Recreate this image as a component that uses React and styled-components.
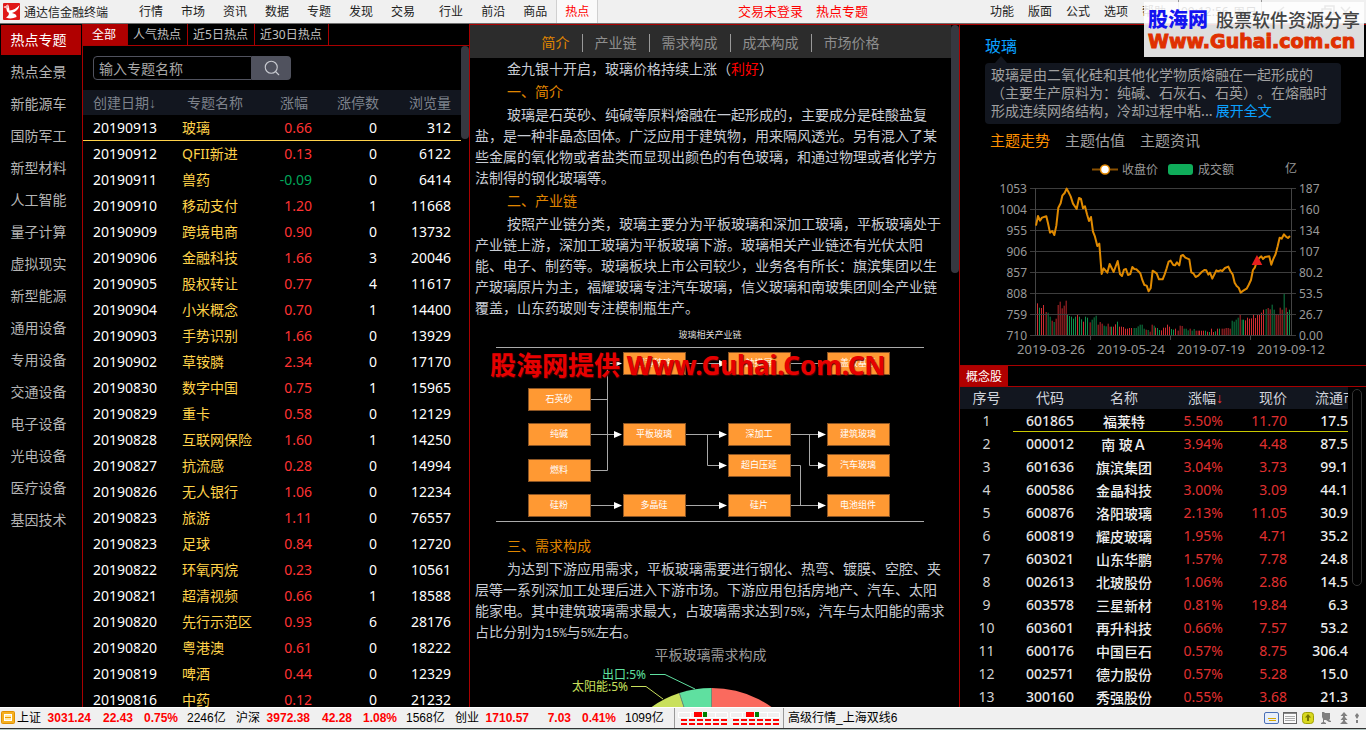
import React, { useState } from 'react'
import styled, { createGlobalStyle } from 'styled-components'
import { Search } from 'lucide-react'

const GlobalStyle = createGlobalStyle`
    * {
        box-sizing: border-box;
    }
    body {
        margin: 0;
        background: #000;
        font-family: 'Noto Sans', 'Noto Sans CJK SC', sans-serif;
        font-size: 14px;
        overflow: hidden;
    }
    button {
        font-family: inherit;
        border: 0;
        padding: 0;
        margin: 0;
        background: none;
        cursor: pointer;
        white-space: nowrap;
    }
    table {
        border-collapse: collapse;
        border-spacing: 0;
    }
    p, h2, h3 {
        margin: 0;
        font-weight: 400;
    }
`

const mainMenu = ['行情', '市场', '资讯', '数据', '专题', '发现', '交易', '行业', '前沿', '商品', '热点']
const toolMenu = ['功能', '版面', '公式', '选项', '帮助']

const categories = [
    '热点专题', '热点全景', '新能源车', '国防军工', '新型材料', '人工智能', '量子计算', '虚拟现实',
    '新型能源', '通用设备', '专用设备', '交通设备', '电子设备', '光电设备', '医疗设备', '基因技术',
]

const topicTabs = ['全部', '人气热点', '近5日热点', '近30日热点']

const topics = [
    ['20190913', '玻璃', '0.66', 0, 312],
    ['20190912', 'QFII新进', '0.13', 0, 6122],
    ['20190911', '兽药', '-0.09', 0, 6414],
    ['20190910', '移动支付', '1.20', 1, 11668],
    ['20190909', '跨境电商', '0.90', 0, 13732],
    ['20190906', '金融科技', '1.66', 3, 20046],
    ['20190905', '股权转让', '0.77', 4, 11617],
    ['20190904', '小米概念', '0.70', 1, 14400],
    ['20190903', '手势识别', '1.66', 0, 13929],
    ['20190902', '草铵膦', '2.34', 0, 17170],
    ['20190830', '数字中国', '0.75', 1, 15965],
    ['20190829', '重卡', '0.58', 0, 12129],
    ['20190828', '互联网保险', '1.60', 1, 14250],
    ['20190827', '抗流感', '0.28', 0, 14994],
    ['20190826', '无人银行', '1.06', 0, 12234],
    ['20190823', '旅游', '1.11', 0, 76557],
    ['20190823', '足球', '0.84', 0, 12720],
    ['20190822', '环氧丙烷', '0.23', 0, 10561],
    ['20190821', '超清视频', '0.66', 1, 18588],
    ['20190820', '先行示范区', '0.93', 6, 28176],
    ['20190820', '粤港澳', '0.61', 0, 18222],
    ['20190819', '啤酒', '0.44', 0, 12329],
    ['20190816', '中药', '0.12', 0, 21232],
]

const articleTabs = ['简介', '产业链', '需求构成', '成本构成', '市场价格']

const stocks = [
    ['601865', '福莱特', '5.50%', '11.70', '17.5'],
    ['000012', '南 玻Ａ', '3.94%', '4.48', '87.5'],
    ['601636', '旗滨集团', '3.04%', '3.73', '99.1'],
    ['600586', '金晶科技', '3.00%', '3.09', '44.1'],
    ['600876', '洛阳玻璃', '2.13%', '11.05', '30.9'],
    ['600819', '耀皮玻璃', '1.95%', '4.71', '35.2'],
    ['603021', '山东华鹏', '1.57%', '7.78', '24.8'],
    ['002613', '北玻股份', '1.06%', '2.86', '14.5'],
    ['603578', '三星新材', '0.81%', '19.84', '6.3'],
    ['603601', '再升科技', '0.66%', '7.57', '53.2'],
    ['600176', '中国巨石', '0.57%', '8.75', '306.4'],
    ['002571', '德力股份', '0.57%', '5.28', '15.0'],
    ['300160', '秀强股份', '0.55%', '3.68', '21.3'],
]

const indexes = [
    ['上证', '3031.24', '22.43', '0.75%', '2246亿'],
    ['沪深', '3972.38', '42.28', '1.08%', '1568亿'],
    ['创业', '1710.57', '7.03', '0.41%', '1099亿'],
]

const Page = styled.div`
    display: flex;
    flex-direction: column;
    height: 100vh;
    overflow: hidden;
    position: relative;
`

/* ---------- top bar ---------- */

const TopBar = styled.header`
    display: flex;
    align-items: stretch;
    flex: none;
    height: 24px;
    background: #f0f0f0;
    border-bottom: 1px solid #6e6e6e;
    font-size: 12px;
    color: #222;
`

const Brand = styled.div`
    display: flex;
    align-items: center;
    gap: 3px;
    width: 130px;
    padding-left: 3px;
`

const MenuButton = styled.button`
    height: 23px;
    padding: 0 ${props => props.$tight ? '7px' : '9px'};
    font-size: 12px;
    line-height: 22px;
    color: ${props => props.$active ? '#f00' : '#222'};
    background: ${props => props.$active ? '#fafafa' : 'transparent'};
    box-shadow: ${props => props.$active ? 'inset 1px 0 #d0d0d0, inset -1px 0 #d0d0d0' : 'none'};
    margin-left: ${props => props.$split ? '6px' : '0'};
`

const Spacer = styled.div`
    flex: ${props => props.$grow} 0 0;
`

const Notice = styled.a`
    font-size: 13px;
    line-height: 22px;
    color: #f00;
    text-decoration: none;
    margin-right: ${props => props.$gap ? '13px' : '0'};
`

const Clock = styled.div`
    display: flex;
    justify-content: space-between;
    align-items: center;
    width: 84px;
    margin-left: 5px;
    padding: 0 4px 0 2px;
    border-left: 1px solid #999;
    border-right: 1px solid #999;
`

const WindowButtons = styled.div`
    display: flex;
    align-items: center;
    gap: 14px;
    width: 104px;
    padding-left: 12px;
`

const SiteStamp = styled.div`
    position: absolute;
    top: 2px;
    right: 2px;
    width: 220px;
    height: 55px;
    padding: 4px 4px 0;
    overflow: hidden;
    background: rgba(255, 255, 255, 0.87);
    white-space: nowrap;
`

const StampLine = styled.div`
    display: flex;
    align-items: center;
    gap: 8px;
    height: 25px;
`

const StampName = styled.span`
    font: 900 20px 'Noto Sans CJK SC', sans-serif;
    color: #1414f0;
`

const StampSlogan = styled.span`
    font: 500 18px 'Noto Sans CJK SC', sans-serif;
    color: #444;
`

const StampUrl = styled.div`
    font: bold 19px/20px 'DejaVu Sans', sans-serif;
    color: #e03000;
    -webkit-text-stroke: 1px #e03000;
`

/* ---------- layout ---------- */

const Main = styled.main`
    flex: 1;
    min-height: 0;
    display: grid;
    grid-template-columns: 82px 387px minmax(0, 490fr) minmax(0, 407fr);
    grid-template-rows: minmax(0, 1fr);
`

const Thumb = styled.div`
    width: 8px;
    height: ${props => props.$height};
    border-radius: 4px;
    background: #363840;
`

const SideNav = styled.nav`
    display: flex;
    flex-direction: column;
    gap: 2px;
    padding: 1px 1px 0;
`

const SideItem = styled.button`
    height: 30px;
    padding: 0 5px 2px 0;
    font-size: 14px;
    color: ${props => props.$active ? '#fff' : '#b4b4b4'};
    background: ${props => props.$active ? '#b00000' : 'transparent'};
`

/* ---------- topics ---------- */

const TopicPanel = styled.section`
    display: flex;
    flex-direction: column;
    overflow: hidden;
    border-left: 1px solid #a80000;
`

const TopicTabs = styled.div`
    display: flex;
    flex: none;
    height: 22px;
    border-bottom: 1px solid #a80000;
`

const TopicTab = styled.button`
    padding: ${props => props.$active ? '0 11px 0 9px' : '0 6px 0 5px'};
    font-size: 12px;
    line-height: 20px;
    color: ${props => props.$active ? '#fff' : '#c0c0c0'};
    background: ${props => props.$active ? '#b00000' : 'transparent'};
    border-right: 1px solid #a80000;
`

const TopicBody = styled.div`
    display: flex;
    min-height: 0;
    overflow: hidden;
`

const TopicList = styled.div`
    flex: 1;
`

const SearchForm = styled.form`
    display: flex;
    margin: 10px 0 10px 10px;
    height: 24px;
`

const SearchInput = styled.input`
    width: 159px;
    padding: 0 5px;
    font: 14px 'Noto Sans CJK SC', sans-serif;
    color: #a8a8a8;
    background: #000;
    border: 1px solid #50525e;
    border-radius: 4px 0 0 4px;
    outline: 0;
    &::placeholder {
        color: #a8a8a8;
    }
`

const SearchButton = styled.button`
    display: flex;
    align-items: center;
    justify-content: center;
    width: 39px;
    background: #50525e;
    border-radius: 0 4px 4px 0;
`

const SortArrow = styled.i`
    font-family: 'Liberation Sans', sans-serif;
    font-style: normal;
`

const TopicTable = styled.table`
    width: 100%;
    table-layout: fixed;
    th {
        height: 25px;
        padding: 0 0 1px;
        font-weight: 400;
        text-align: right;
        color: #7d828c;
        background: #12161f;
        white-space: nowrap;
    }
    th:nth-child(1) { width: 99px; padding-left: 10px; text-align: left; }
    th:nth-child(2) { width: 62px; padding-left: 5px; text-align: left; }
    th:nth-child(3) { width: 68px; padding-right: 4px; }
    th:nth-child(4) { width: 67px; }
    th:nth-child(5) { padding-right: 10px; }
    td {
        height: 26px;
        padding: 0 0 2px;
        text-align: right;
        color: #fff;
        white-space: nowrap;
    }
    td:nth-child(1) { padding-left: 10px; text-align: left; }
    td:nth-child(2) { color: #ffd24a; text-align: left; }
    td:nth-child(4) { padding-right: 2px; }
    td:nth-child(5) { padding-right: 10px; }
`

const TopicRow = styled.tr`
    cursor: pointer;
    td {
        box-shadow: ${props => props.$active ? 'inset 0 -1px #ffd24a' : 'none'};
    }
`

const Change = styled.td`
    && {
        color: ${props => props.$down ? '#00a65a' : '#ff3333'};
    }
`

/* ---------- article ---------- */

const ArticlePanel = styled.section`
    display: flex;
    min-height: 0;
    overflow: hidden;
    border-left: 1px solid #a80000;
    border-top: 1px solid #a80000;
`

const ArticleBody = styled.div`
    flex: 1;
    min-width: 0;
`

const ArticleTabs = styled.div`
    display: flex;
    align-items: center;
    justify-content: center;
    height: 33px;
    padding-top: 2px;
    background: #2c2c2c;
`

const ArticleTab = styled.button`
    padding: 0 12px;
    font-size: 14px;
    line-height: 18px;
    color: ${props => props.$active ? '#e08600' : '#8f8f8f'};
    border-right: 1px solid #999;
    &:last-child {
        border-right: 0;
    }
`

const Text = styled.p`
    padding: 0 5px;
    margin-bottom: 2px;
    font-family: 'Noto Sans CJK SC', sans-serif;
    font-size: 14px;
    line-height: 21px;
    text-indent: 32px;
    text-spacing-trim: space-all;
    color: #c8ccd4;
`

const Heading = styled(Text).attrs({ as: 'h3' })`
    color: #e08600;
`

const Good = styled.span`
    color: #f00;
`

const Num = styled.span`
    font: 12px 'Liberation Mono', monospace;
`

const Figure = styled.figure`
    position: relative;
    display: flex;
    justify-content: center;
    margin: 0 0 1px;
    padding-top: 1px;
`

const FigureStamp = styled.div`
    position: absolute;
    top: 26px;
    left: 20px;
    font: bold 26px/38px 'Noto Sans', 'Noto Sans CJK SC', sans-serif;
    color: #e60000;
    text-shadow: 1px 1px 1px #500;
    white-space: nowrap;
`

const PieTitle = styled(Text)`
    text-align: center;
    text-indent: 0;
    color: #999;
`

/* ---------- right side ---------- */

const RightPanel = styled.aside`
    display: flex;
    flex-direction: column;
    overflow: hidden;
    border-left: 1px solid #a80000;
    border-top: 1px solid #a80000;
`

const ThemeBox = styled.div`
    flex: none;
    height: 340px;
    padding: 9px 25px 0;
`

const ThemeName = styled.h2`
    font-size: 16px;
    line-height: 24px;
    color: #0aa0ff;
`

const Bubble = styled.div`
    position: relative;
    margin-top: 5px;
    padding: 2px 6px 5px;
    line-height: 18px;
    font-family: 'Noto Sans CJK SC', sans-serif;
    text-spacing-trim: space-all;
    color: #a0a0a0;
    background: #12161f;
    border-radius: 4px;
    &::before {
        content: '';
        position: absolute;
        left: 10px;
        top: -7px;
        border: 6px solid transparent;
        border-top: 0;
        border-bottom: 7px solid #12161f;
    }
    a {
        color: #0aa0ff;
        text-decoration: none;
    }
`

const ThemeTabs = styled.div`
    display: flex;
    gap: 15px;
    height: 31px;
    padding-left: 5px;
`

const ThemeTab = styled.button`
    font-size: 15px;
    color: ${props => props.$active ? '#ff9100' : '#a0a0a0'};
`

const StockTabs = styled.div`
    display: flex;
    flex: none;
    height: 22px;
    border-top: 1px solid #a80000;
    border-bottom: 1px solid #a80000;
`

const StockTab = styled.button`
    width: 48px;
    font-size: 12px;
    color: #fff;
    background: #b00000;
`

const StockBody = styled.div`
    display: flex;
    min-height: 0;
    overflow: hidden;
`

const StockTable = styled.table`
    flex: 1;
    width: 0;
    table-layout: fixed;
    th, td {
        height: 23px;
        padding: 0;
        text-align: right;
        white-space: nowrap;
        overflow: hidden;
    }
    th {
        height: 22px;
        padding-bottom: 1px;
        line-height: 20px;
        font-weight: 400;
        color: #d0d4dc;
        background: #12161f;
    }
    th:nth-child(1) { width: 53px; text-align: center; }
    th:nth-child(2) { width: 74px; text-align: center; }
    th:nth-child(3) { width: 74px; text-align: center; }
    th:nth-child(4) { width: 62px; }
    th:nth-child(5) { width: 64px; }
    th:nth-child(6) { padding-left: 28px; text-align: left; }
    th i { color: #ff3333; }
    td:nth-child(1) { color: #d0d0d0; text-align: center; }
    td:nth-child(2) { color: #e6e6e6; font-weight: 500; text-align: center; }
    td:nth-child(3) { color: #eee; font-weight: 500; text-align: center; }
    td:nth-child(4), td:nth-child(5) { color: #e03030; }
    td:nth-child(6) { color: #eee; font-weight: 500; }
`

const StockRow = styled.tr`
    cursor: pointer;
    td + td {
        box-shadow: ${props => props.$active ? 'inset 0 -1px #c8c800' : 'none'};
    }
`

const PillTrack = styled.div`
    flex: none;
    width: 18px;
    padding: 2px 4px 0;
`

const Pill = styled.div`
    width: 10px;
    height: 197px;
    border: 1px solid #333;
    border-radius: 5px;
`

/* ---------- status bar ---------- */

const StatusBar = styled.footer`
    display: flex;
    align-items: center;
    flex: none;
    height: 23px;
    padding: 0 6px 2px 1px;
    font-family: 'Liberation Sans', 'Noto Sans CJK SC', sans-serif;
    font-size: 12px;
    line-height: 18px;
    color: #000;
    background: #f0f0f0;
    border-top: 1px solid #fff;
    box-shadow: inset 0 -1px #b4c6c2, inset 0 -2px #333;
    white-space: nowrap;
`

const Quote = styled.div`
    display: grid;
    grid-template-columns: 28px 46px 42px 45px 58px;
    align-items: baseline;
    span {
        text-align: right;
    }
    span:first-child {
        text-align: left;
    }
    span:last-child {
        padding-left: 9px;
        text-align: left;
    }
`

const Red = styled.span`
    font-weight: 700;
    color: #f00;
`

const StatusCell = styled.div`
    display: flex;
    align-items: center;
    gap: 2px;
    height: 20px;
    padding: 0 ${props => props.$pad};
    border-left: 1px solid #999;
`

const TrayIcons = styled.div`
    display: flex;
    margin-left: auto;
`

const Logo = () => (
    <svg width="18" height="18" viewBox="0 0 18 18">
        <rect width="17" height="17" rx="1" fill="#e01818" />
        <path d="M0.500 4Q3 3 5 1.500Q6.500 4 6.500 7.500Q12 7 16.500 2Q15.500 8 9 10Q14 11 13.500 14Q8 16.500 3 14.500Q7 12 5.500 9.500Q3.500 9 3.500 5.500Z" fill="#fff" />
        <path d="M0.500 4Q3 3 5 1.500L5.500 5L3.500 5.500Z" fill="#f6b0b0" />
    </svg>
)

/* industry chain: column x and row y of every box */
const BOX_W = 62
const BOX_H = 23
const chainBoxes = [
    [153, 31, '超薄玻璃'], [258, 31, '触摸屏'], [357, 31, '盖板基板'],
    [58, 67, '石英砂'],
    [58, 102, '纯碱'], [153, 102, '平板玻璃'], [258, 102, '深加工'], [357, 102, '建筑玻璃'],
    [258, 133, '超白压延'], [357, 133, '汽车玻璃'],
    [58, 138, '燃料'],
    [58, 173, '硅粉'], [153, 173, '多晶硅'], [258, 173, '硅片'], [357, 173, '电池组件'],
]
const chainLines = [
    'M120 78.5H138', 'M120 149.5H137.5', 'M137.5 149.5V42.5H145', 'M120 113.5H145',
    'M215 42.5H250', 'M320 42.5H349', 'M215 113.5H250', 'M320 113.5H349',
    'M237.5 113.5V144.5H250', 'M339.5 113.5V144.5H349', 'M320 144.5H330.5V184.5',
    'M120 184.5H145', 'M215 184.5H250', 'M320 184.5H349',
]
const chainArrows = [
    [153, 42.5], [258, 42.5], [357, 42.5], [153, 113.5], [258, 113.5], [357, 113.5],
    [258, 144.5], [357, 144.5], [153, 184.5], [258, 184.5], [357, 184.5],
]

const IndustryChain = () => (
    <svg width="480" height="213" viewBox="1 0 480 213" fontFamily="Noto Sans CJK SC, sans-serif" fontSize="9" textAnchor="middle">
        <text x="240" y="17" fill="#ddd">玻璃相关产业链</text>
        <path d="M26 26.5H454M26 200.5H454" stroke="#aaa" fill="none" />
        {chainLines.map(d => <path key={d} d={d} stroke="#a8a8a8" fill="none" />)}
        {chainArrows.map(([x, y]) => (
            <path key={`${x}-${y}`} d={`M${x - 1} ${y} l-8 -3.5 v7 z`} fill="#fff" />
        ))}
        {chainBoxes.map(([x, y, name]) => (
            <g key={name}>
                <rect x={x + 0.5} y={y + 0.5} width={BOX_W} height={BOX_H - 1} fill="#ff9933" stroke="#8a5424" />
                <text x={x + 31} y={y + 14} fill="#fff">{name}</text>
            </g>
        ))}
    </svg>
)

const DemandPie = () => (
    <Figure>
        <svg width="480" height="250" viewBox="0 0 480 250" fontFamily="Noto Sans, Noto Sans CJK SC, sans-serif" fontSize="12">
            <path d="M240.500 124V20A104 104 0 1 1 179.400 39.900Z" fill="#fa6a5e" />
            <path d="M240.500 124L179.400 39.900A104 104 0 0 1 208.400 25.100Z" fill="#c9e05c" />
            <path d="M240.500 124L208.400 25.100A104 104 0 0 1 240.500 20Z" fill="#5fe0a0" />
            <path d="M240.500 124V20M240.500 124L208.400 25.100" stroke="#6a8f78" fill="none" />
            <path d="M179 6.500H194L224 21" stroke="#5fe0a0" fill="none" />
            <path d="M160 18.500H175L192 31" stroke="#c9e05c" fill="none" />
            <text x="175" y="11" fill="#5fe0a0" textAnchor="end">出口:5%</text>
            <text x="157" y="23" fill="#c9e05c" textAnchor="end">太阳能:5%</text>
        </svg>
    </Figure>
)

/* close price trace, in thirds of a pixel */
const closeTrace = `228,212 234,183 240,197 246,188 259,184 264,205 270,233 277,228 283,240 289,212 295,158
    302,145 307,122 314,114 320,101 326,112 332,124 339,146 350,162 357,129 363,132 369,160 375,154 381,178
    387,198 393,186 399,230 405,245 412,273 418,266 425,357 431,340 442,353 449,327 461,351 473,318 480,357
    486,363 492,344 498,342 504,360 511,357 517,336 523,342 529,343 541,355 547,375 553,390 560,392 566,409
    572,400 578,347 590,355 597,373 608,373 614,358 620,340 626,320 632,317 640,330 645,331 651,322 658,331
    663,303 669,300 676,308 688,313 694,352 700,355 707,366 715,362 725,351 733,345 739,346 745,359 750,353
    757,371 769,346 775,349 781,346 787,348 795,339 805,335 811,348 818,358 824,383 830,393 836,398 842,413
    850,407 860,401 866,390 873,375 879,345 885,337 891,317 897,310 904,304 909,312 915,306 928,304 934,329
    940,312 947,297 953,274 959,248 965,251 972,238 978,245 984,249 990,243`

const volumes = `r88 r98 g85 r84 r93 r72 g70 g58 r46 g42 r52 r93 r103 r83 r91 r106 g65 g60 g58 g52 g58 r64 g58
    g50 r43 g58 g55 r41 g49 g56 g61 r34 r42 r37 g31 g29 r37 r28 g28 r28 r35 g43 r28 r28 r27 r22 r22 r24 r24
    g24 g24 g29 g34 g34 g22 r19 g18 r13 r34 g31 r25 g24 g18 r17 r25 r25 r34 r28 g21 g19 r22 r16 r31 r30 g22
    g22 g17 r22 g16 g21 r16 r16 r16 r16 r16 g16 r13 g12 r22 r12 g14 r22 g22 r22 r22 r24 r24 r22 g46 g43 g49
    g55 r64 g49 g49 r47 r55 r52 r53 r66 r54 r63 r63 r70 r79 g81 r84 r80 g94 g79 r66 r64 r85 r79 g127 r85
    g72 g79 r73`.split(/\s+/)

const leftAxis = ['1053', '1004', '955', '906', '857', '808', '759', '710']
const rightAxis = ['187', '160', '134', '107', '80.2', '53.5', '26.7', '0.00']
const dates = ['2019-03-26', '2019-05-24', '2019-07-19', '2019-09-12']

const TrendChart = () => (
    <svg width="356" height="205" viewBox="25 0 356 205" fontFamily="Noto Sans, Noto Sans CJK SC, sans-serif" fontSize="12" fill="#999">
        <path d="M132 14.500H158" stroke="#8a5000" strokeWidth="2" />
        <circle cx="145" cy="14.500" r="4.500" fill="#fff" stroke="#e08600" strokeWidth="1.500" />
        <text x="162" y="19">收盘价</text>
        <rect x="208" y="9" width="25" height="11" rx="3" fill="#0fac5a" />
        <text x="238" y="19">成交额</text>
        <text x="325" y="18">亿</text>
        {volumes.map((v, i) => {
            const h = Number(v.slice(1)) / 3
            const shift = i % 22 >= 5 && i % 22 < 16 ? 0.5 : 0
            const wide = shift ? 1.5 : 1
            return (
                <rect key={i} x={75 + i * 2 + shift} y={181 - h} width={wide} height={h}
                    fill={v[0] === 'r' ? '#d02c30' : '#0f8f4c'} opacity={shift ? 0.6 : 1} />
            )
        })}
        {leftAxis.map((label, i) => (
            <g key={label}>
                <path d={`M70 ${33.5 + i * 21}H336`} stroke="#444" strokeOpacity="0.9" />
                <text x="67" y={38 + i * 21} textAnchor="end">{label}</text>
                <text x="339" y={38 + i * 21}>{rightAxis[i]}</text>
            </g>
        ))}
        <path d="M75.500 33V181M331.500 33V181M130.500 181V185M210.500 181V185M290.500 181V185" stroke="#444" />
        {dates.map((d, i) => (
            <text key={d} x={91 + i * 80} y="199" fontSize="13" textAnchor="middle">{d}</text>
        ))}
        <g transform="scale(0.3333)">
            <polyline points={closeTrace} fill="none" stroke="#e08a00" strokeWidth="6" strokeLinejoin="round" />
            <path d="M891 300L907 330H875Z" fill="#e61e1e" />
        </g>
    </svg>
)

const Meter = () => (
    <svg width="50" height="15" viewBox="0 0 50 15">
        <path d="M0.500 1.500H49.500V6.500H0.500ZM12.500 1.500V6.500M37.500 1.500V6.500" fill="none" stroke="#fff" />
        <rect x="16" y="1" width="8" height="5" fill="#f00" />
        <rect x="25" y="1" width="4" height="5" fill="#008000" />
        {[0, 8, 16, 24, 32, 40].map(x => (
            <path key={x} d={`M${x + 3} 9h6M${x + 3} 13h6`} stroke="#f00" strokeWidth="2" />
        ))}
    </svg>
)

const Tray = () => (
    <svg width="96" height="14" viewBox="0 0 96 14">
        <rect x="0.500" y="1.500" width="14" height="11" rx="1.500" fill="#e6eefa" stroke="#4a6fb5" />
        <path d="M4 7.500H12M5 9.500H12" stroke="#d8a800" />
        <rect x="19.500" y="1.500" width="13" height="11" fill="#fafafa" stroke="#666" />
        <path d="M20 2.500H32" stroke="#888" />
        <path d="M21 5.500H31M21 7.500H31M21 9.500H31" stroke="#aaa" />
        <rect x="38.500" y="1.500" width="11" height="11" rx="3" fill="#d8d820" stroke="#a0a000" />
        <path d="M44 3L47 6.500H45V10H43V6.500H41Z" fill="#777700" />
        <path d="M58 1H60L61 2H66V8L65 9L67 10V11H65L62 9H60V11L62 12V13H57V12L59 11V8L58 6Z" fill="#808080" />
        <path d="M80 1L83.500 5H81V6L83.500 9H81V10L84 13H76L79 10V9H76.500L79 6V5H76.500Z" fill="#808080" />
        <path d="M93 2L95 4.500L93.500 7.500H92.500L91 4.500ZM92 9H94V12H92Z" fill="#808080" />
    </svg>
)

const App = () => {
    const [menu, setMenu] = useState('热点')
    const [category, setCategory] = useState('热点专题')
    const [topicTab, setTopicTab] = useState('全部')
    const [topic, setTopic] = useState(0)
    const [section, setSection] = useState('简介')
    const [themeTab, setThemeTab] = useState('主题走势')
    const [stock, setStock] = useState(0)

    return (
        <Page>
            <GlobalStyle />
            <TopBar>
                <Brand><Logo />通达信金融终端</Brand>
                {mainMenu.map(m => (
                    <MenuButton key={m} $active={m === menu} $split={m === '行业'} onClick={() => setMenu(m)}>{m}</MenuButton>
                ))}
                <Spacer $grow={140} />
                <Notice href="#login" $gap>交易未登录</Notice>
                <Notice href="#hot">热点专题</Notice>
                <Spacer $grow={115} />
                {toolMenu.map(m => <MenuButton key={m} $tight>{m}</MenuButton>)}
                <Clock><span>09:12:56</span><span>周日</span></Clock>
                <WindowButtons>
                    <svg width="80" height="14" viewBox="0 0 80 14" fill="none" stroke="#555" strokeWidth="1.500">
                        <path d="M10 2L4 7L10 12M26 11H36M48 4H57V12H48ZM51 4V1H60V9H57M67 2L76 12M76 2L67 12" />
                    </svg>
                </WindowButtons>
            </TopBar>

            <Main>
                <SideNav>
                    {categories.map(c => (
                        <SideItem key={c} $active={c === category} onClick={() => setCategory(c)}>{c}</SideItem>
                    ))}
                </SideNav>

                <TopicPanel>
                    <TopicTabs>
                        {topicTabs.map(t => (
                            <TopicTab key={t} $active={t === topicTab} onClick={() => setTopicTab(t)}>{t}</TopicTab>
                        ))}
                    </TopicTabs>
                    <TopicBody>
                        <TopicList>
                            <SearchForm onSubmit={e => e.preventDefault()}>
                                <SearchInput aria-label="专题名称" placeholder="输入专题名称" />
                                <SearchButton aria-label="搜索"><Search size={18} color="#c8cad0" strokeWidth={1.5} /></SearchButton>
                            </SearchForm>
                            <TopicTable>
                                <thead>
                                    <tr><th>创建日期<SortArrow>↓</SortArrow></th><th>专题名称</th><th>涨幅</th><th>涨停数</th><th>浏览量</th></tr>
                                </thead>
                                <tbody>
                                    {topics.map(([date, name, change, limit, views], i) => (
                                        <TopicRow key={name} $active={i === topic} onClick={() => setTopic(i)}>
                                            <td>{date}</td>
                                            <td>{name}</td>
                                            <Change $down={change.startsWith('-')}>{change}</Change>
                                            <td>{limit}</td>
                                            <td>{views}</td>
                                        </TopicRow>
                                    ))}
                                </tbody>
                            </TopicTable>
                        </TopicList>
                        <Thumb $height="93px" />
                    </TopicBody>
                </TopicPanel>

                <ArticlePanel>
                    <ArticleBody>
                        <ArticleTabs>
                            {articleTabs.map(t => (
                                <ArticleTab key={t} $active={t === section} onClick={() => setSection(t)}>{t}</ArticleTab>
                            ))}
                        </ArticleTabs>
                        <Text>金九银十开启，玻璃价格持续上涨（<Good>利好</Good>）</Text>
                        <Heading>一、简介</Heading>
                        <Text>玻璃是石英砂、纯碱等原料熔融在一起形成的，主要成分是硅酸盐复盐，是一种非晶态固体。广泛应用于建筑物，用来隔风透光。另有混入了某些金属的氧化物或者盐类而显现出颜色的有色玻璃，和通过物理或者化学方法制得的钢化玻璃等。</Text>
                        <Heading>二、产业链</Heading>
                        <Text>按照产业链分类，玻璃主要分为平板玻璃和深加工玻璃，平板玻璃处于产业链上游，深加工玻璃为平板玻璃下游。玻璃相关产业链还有光伏太阳能、电子、制药等。玻璃板块上市公司较少，业务各有所长：旗滨集团以生产玻璃原片为主，福耀玻璃专注汽车玻璃，信义玻璃和南玻集团则全产业链覆盖，山东药玻则专注模制瓶生产。</Text>
                        <Figure>
                            <IndustryChain />
                            <FigureStamp>股海网提供 Www.Guhai.Com.CN</FigureStamp>
                        </Figure>
                        <Heading>三、需求构成</Heading>
                        <Text>为达到下游应用需求，平板玻璃需要进行钢化、热弯、镀膜、空腔、夹层等一系列深加工处理后进入下游市场。下游应用包括房地产、汽车、太阳能家电。其中建筑玻璃需求最大，占玻璃需求达到<Num>75%</Num>，汽车与太阳能的需求占比分别为<Num>15%</Num>与<Num>5%</Num>左右。</Text>
                        <PieTitle>平板玻璃需求构成</PieTitle>
                        <DemandPie />
                    </ArticleBody>
                    <Thumb $height="248px" />
                </ArticlePanel>

                <RightPanel>
                    <ThemeBox>
                        <ThemeName>玻璃</ThemeName>
                        <Bubble>
                            玻璃是由二氧化硅和其他化学物质熔融在一起形成的（主要生产原料为：纯碱、石灰石、石英）。在熔融时形成连续网络结构，冷却过程中粘... <a href="#more">展开全文</a>
                        </Bubble>
                        <ThemeTabs>
                            {['主题走势', '主题估值', '主题资讯'].map(t => (
                                <ThemeTab key={t} $active={t === themeTab} onClick={() => setThemeTab(t)}>{t}</ThemeTab>
                            ))}
                        </ThemeTabs>
                        <TrendChart />
                    </ThemeBox>
                    <StockTabs><StockTab>概念股</StockTab></StockTabs>
                    <StockBody>
                        <StockTable>
                            <thead>
                                <tr><th>序号</th><th>代码</th><th>名称</th><th>涨幅<SortArrow>↓</SortArrow></th><th>现价</th><th>流通市值</th></tr>
                            </thead>
                            <tbody>
                                {stocks.map(([code, name, pct, price, cap], i) => (
                                    <StockRow key={code} $active={i === stock} onClick={() => setStock(i)}>
                                        <td>{i + 1}</td><td>{code}</td><td>{name}</td><td>{pct}</td><td>{price}</td><td>{cap}</td>
                                    </StockRow>
                                ))}
                            </tbody>
                        </StockTable>
                        <PillTrack><Pill /></PillTrack>
                    </StockBody>
                </RightPanel>
            </Main>

            <StatusBar>
                <svg width="16" height="14" viewBox="0 0 16 14">
                    <rect x="0.500" y="0.500" width="13" height="12" rx="1" fill="#f5b020" stroke="#e09000" />
                    <rect x="3.500" y="3.500" width="7" height="6" fill="#ffe9a8" stroke="#fff" />
                    <path d="M4 6.500H10" stroke="#f0a000" />
                </svg>
                {indexes.map(([name, value, diff, pct, amount]) => (
                    <Quote key={name}>
                        <span>{name}</span><Red>{value}</Red><Red>{diff}</Red><Red>{pct}</Red><span>{amount}</span>
                    </Quote>
                ))}
                <StatusCell $pad="3px"><Meter /><Meter /></StatusCell>
                <StatusCell $pad="4px">高级行情_上海双线6</StatusCell>
                <TrayIcons><Tray /></TrayIcons>
            </StatusBar>

            <SiteStamp>
                <StampLine><StampName>股海网</StampName><StampSlogan>股票软件资源分享</StampSlogan></StampLine>
                <StampUrl>Www.Guhai.com.cn</StampUrl>
            </SiteStamp>
        </Page>
    )
}

export default App
